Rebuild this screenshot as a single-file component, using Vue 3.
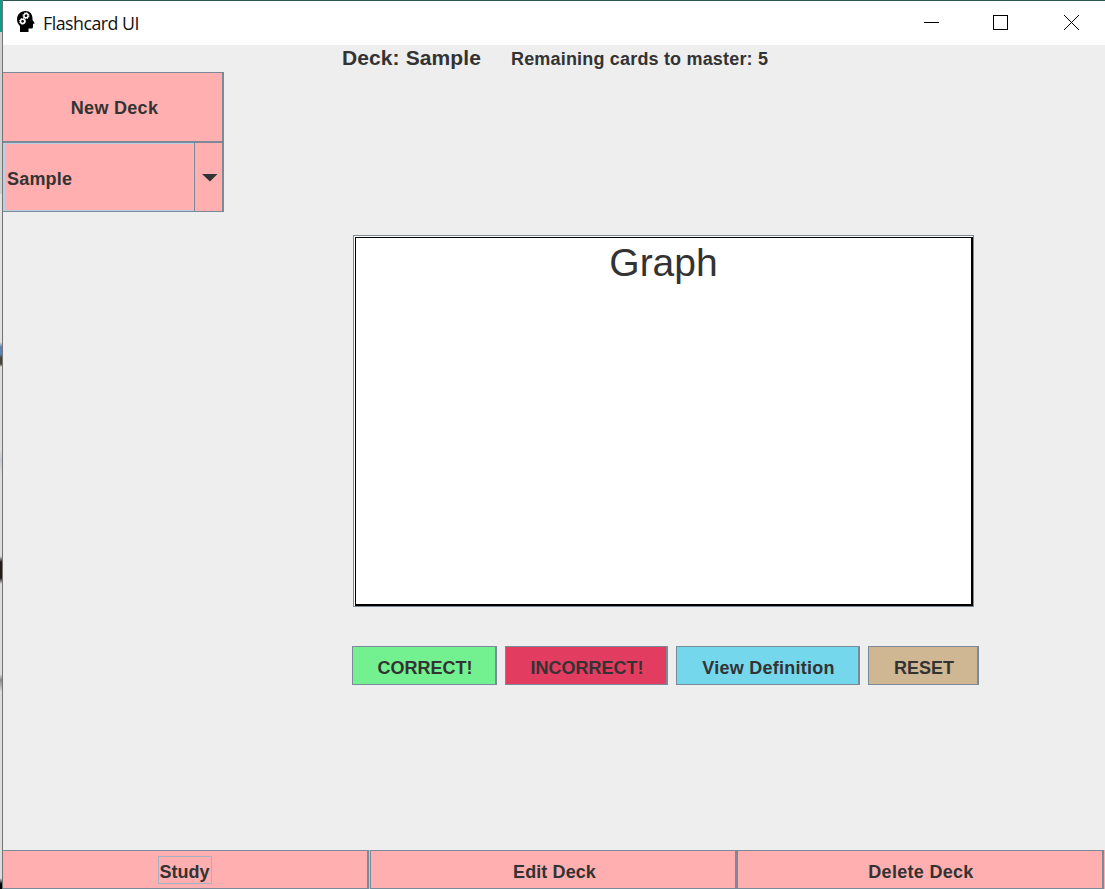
<script setup>
const actions = [
  { label: 'CORRECT!', kind: 'correct' },
  { label: 'INCORRECT!', kind: 'incorrect' },
  { label: 'View Definition', kind: 'view' },
  { label: 'RESET', kind: 'reset' },
]
</script>

<template>
  <div class="screen">
    <div class="edge"></div>
    <div class="window">
      <header class="titlebar">
        <svg class="logo" width="18" height="22" viewBox="0 0 18 22">
          <path fill="#000" d="M3 21V15C1 13.200 0 11 0 8.500C0 3.500 3.600 0 8.500 0C13 0 15.500 3 15.500 7.500V9L17.800 12.300L16 13V16Q16 17.500 14.500 17.500H11.500V21Z" />
          <g fill="none" stroke="#fff">
            <circle cx="9" cy="4.700" r="2.100" stroke-width="1.500" />
            <circle cx="9" cy="4.700" r="3" stroke-width="1" stroke-dasharray="1.200 1.156" />
            <circle cx="5.600" cy="10.300" r="2.100" stroke-width="1.500" />
            <circle cx="5.600" cy="10.300" r="3" stroke-width="1" stroke-dasharray="1.200 1.156" />
          </g>
        </svg>
        <span class="title">Flashcard UI</span>
        <svg class="controls" width="160" height="20" viewBox="0 0 160 20" fill="none" stroke="#000" shape-rendering="crispEdges">
          <path d="M0 10.500H15M69.500 3.500H83.500V17.500H69.500Z" />
          <path d="M140 3L155 18M155 3L140 18" shape-rendering="auto" />
        </svg>
      </header>
      <div class="status">
        <span class="deck">Deck: Sample</span>
        <span class="remaining">Remaining cards to master: 5</span>
      </div>
      <main class="body">
        <aside class="side">
          <button class="new">New Deck</button>
          <div class="combo">
            <div class="value">Sample</div>
            <div class="arrow">
              <svg width="16" height="8" viewBox="0 0 16 8"><path fill="#333" d="M0 0H15.500L8 7.500Z" /></svg>
            </div>
          </div>
        </aside>
        <section class="study">
          <div class="card"><div class="face">Graph</div></div>
          <div class="actions">
            <button v-for="a in actions" :key="a.kind" :class="a.kind">{{ a.label }}</button>
          </div>
        </section>
      </main>
      <footer class="footer">
        <button class="first"><span class="focus">Study</span></button>
        <button class="second">Edit Deck</button>
        <button class="third">Delete Deck</button>
      </footer>
    </div>
  </div>
</template>

<style>
html, body { overflow: hidden; }
</style>

<style scoped>
* { box-sizing: border-box; }
.screen {
  display: flex;
  width: 1105px;
  height: 889px;
  overflow: hidden;
  font-family: "Liberation Sans", Arial, sans-serif;
  font-size: 18px;
  font-weight: bold;
  color: #333;
}
.edge {
  width: 3px;
  border-right: 1px solid #747474;
  background: linear-gradient(#0a9f8c 0 32px, #d0d0d0 32px 194px, #e2e2e2 194px 342px, #5d83b5 347px 354px, #4a433a 358px 364px, #dedede 367px 450px, #c5cbd0 460px, #dedede 475px 556px, #241b19 562px 578px, #dedede 584px 674px, #888 680px, #dedede 692px 878px, #000 884px);
}
.window {
  flex: 1;
  min-width: 0;
  display: flex;
  flex-direction: column;
  background: #eee;
  border-top: 1px solid #2c5650;
}
.titlebar {
  height: 44px;
  display: flex;
  align-items: center;
  background: #fff;
  flex: none;
}
.logo { margin: 0 0 2px 14px; }
.title {
  margin: 0 0 1px 8px;
  font: 17.800px "Open Sans", "Noto Sans", sans-serif;
  letter-spacing: -0.500px;
  color: #111;
}
.controls { margin: 0 21px 2px auto; }
.status {
  height: 27px;
  flex: none;
  display: flex;
  align-items: baseline;
  padding: 1px 0 0 339px;
  white-space: nowrap;
}
.deck { font-size: 21px; width: 169px; letter-spacing: 0.100px; }
.remaining { font-size: 18px; letter-spacing: 0.180px; }
.body { flex: 1; display: flex; }
.side { width: 221px; }
button {
  font: inherit;
  color: inherit;
  letter-spacing: 0.300px;
  margin: 0;
  padding: 0;
  border: 1px solid #7a8a99;
  border-right-width: 2px;
  border-radius: 0;
  background: #ffafaf;
  white-space: nowrap;
}
.new {
  display: block;
  width: 221px;
  height: 70px;
  border-left: 0;
  padding: 2px 0 0 4px;
}
.combo {
  display: flex;
  height: 70px;
  border: 1px solid #7a8a99;
  border-left: 0;
  border-right-width: 2px;
  background: #ffafaf;
}
.value {
  width: 191px;
  padding: 4px 0 0 2px;
  display: flex;
  align-items: center;
  border: 1px solid #b8cfe5;
  border-left-width: 2px;
  letter-spacing: 0.200px;
}
.arrow {
  flex: 1;
  display: flex;
  align-items: center;
  justify-content: center;
  padding: 2px 0 0 2px;
  border-left: 1px solid #7a8a99;
}
.study { padding: 163px 0 0 128px; }
.card {
  width: 621px;
  height: 372px;
  margin-left: 1px;
  border: 1px solid #7a8a99;
  background: #fff;
  padding: 1px 0 0 1px;
}
.face {
  height: 369px;
  border: solid #000;
  border-width: 1px 2px 2px 1px;
  text-align: center;
  font-size: 39px;
  line-height: 50px;
  font-weight: normal;
}
.actions {
  display: flex;
  gap: 8px;
  margin-top: 39px;
}
.actions button { height: 39px; padding: 5px 0 0 2px; letter-spacing: 0; }
.actions .correct { width: 145px; background: #73f08f; }
.actions .incorrect { width: 163px; background: #e23d60; }
.actions .view { width: 184px; background: #74d7ec; letter-spacing: 0.250px; }
.actions .reset { width: 111px; background: #cfb793; }
.footer {
  display: flex;
  height: 39px;
  background: #ffafaf;
}
.footer button { padding-top: 5px; }
.footer .first { width: 366px; border-left: 0; letter-spacing: 0; }
.footer .second { width: 367px; margin-left: 1px; padding-left: 3px; letter-spacing: 0.100px; }
.footer .third { width: 367px; padding-left: 2px; }
.focus {
  display: inline-flex;
  align-items: center;
  height: 28px;
  margin-top: -4px;
  padding: 4px 1px 0 0;
  border: 1px solid #a5b2c4;
}
</style>
